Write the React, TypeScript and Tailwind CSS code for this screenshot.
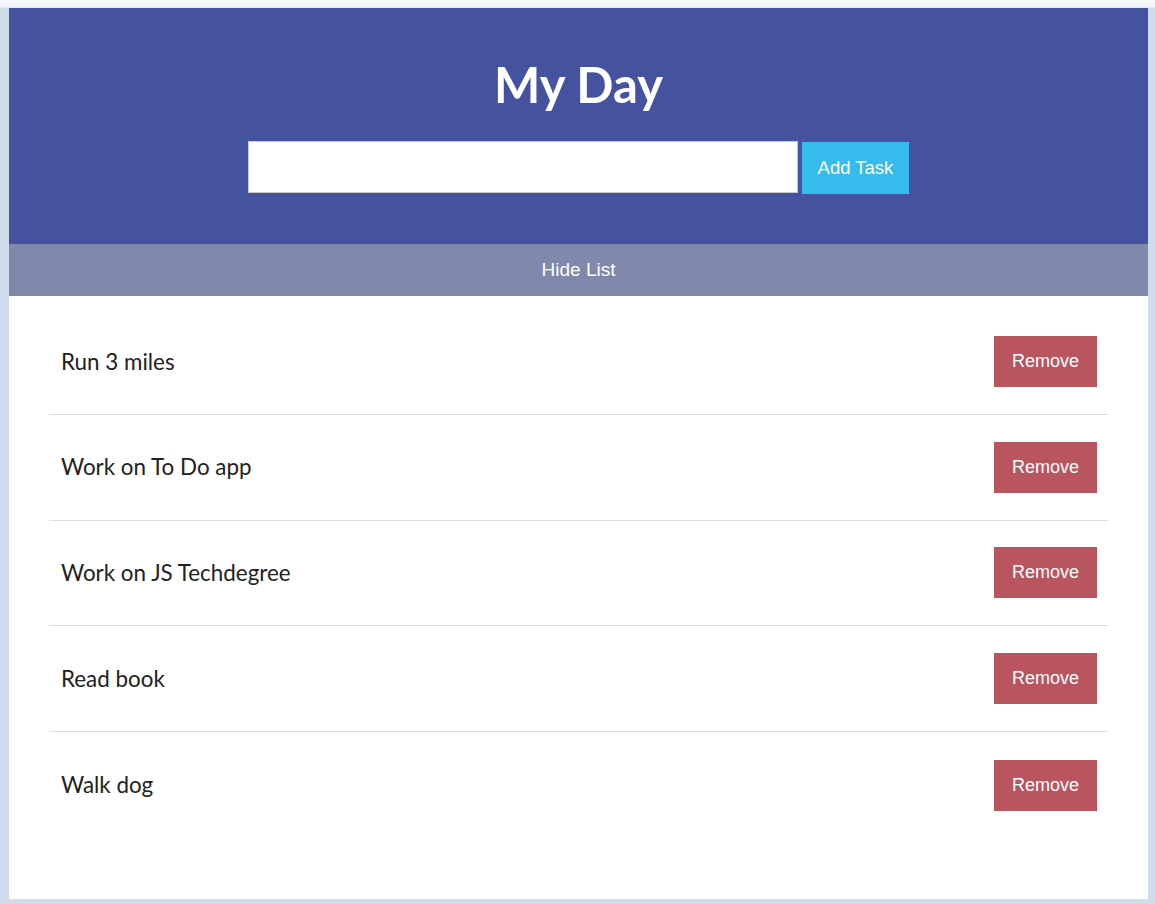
const tasks = ["Run 3 miles", "Work on To Do app", "Work on JS Techdegree", "Read book", "Walk dog"];

export default function App() {
  return (
    <div className="min-h-[904px] w-[1155px] bg-[#d0dcec]">
      <div className="h-[8px] border-b border-[#e2e4e8] bg-[#f5f6f8]" />
      <div className="pl-[9px] pr-[7px] pb-[6px]">
        <div className="w-[1139px] bg-white">
          <header className="flex h-[236px] flex-col items-center bg-[#4452a0] pt-[52px]">
            <h1
              className="text-[49px] font-bold leading-none text-white"
              style={{ fontFamily: "Lato, 'Open Sans', sans-serif" }}
            >
              My Day
            </h1>
            <div className="mt-[32px] flex items-start gap-[4px]">
              <input
                type="text"
                className="h-[52px] w-[550px] border border-[#c8c8c8] bg-white px-3 outline-none"
              />
              <button
                className="mt-[1px] h-[52px] w-[107px] bg-[#35bbec] text-[18.5px] text-white"
                style={{ fontFamily: "'Liberation Sans', Arial, sans-serif" }}
              >
                Add Task
              </button>
            </div>
          </header>
          <div
            className="flex h-[52px] items-center justify-center bg-[#8088ac] text-[19px] text-white"
            style={{ fontFamily: "'Liberation Sans', Arial, sans-serif" }}
          >
            Hide List
          </div>
          <ul className="px-[40px] pt-[13px] pb-[61px]">
            {tasks.map((t, i) => (
              <li
                key={t}
                className={
                  "flex h-[105.8px] items-center justify-between pl-[12px] pr-[11px] " +
                  (i < tasks.length - 1 ? "border-b border-[#dddddd]" : "")
                }
              >
                <span
                  className="text-[22.4px] text-[#222222]"
                  style={{ fontFamily: "Lato, 'Open Sans', sans-serif" }}
                >
                  {t}
                </span>
                <button
                  className="h-[51px] w-[103px] bg-[#b9555f] text-[18px] text-white"
                  style={{ fontFamily: "'Liberation Sans', Arial, sans-serif" }}
                >
                  Remove
                </button>
              </li>
            ))}
          </ul>
        </div>
      </div>
    </div>
  );
}
